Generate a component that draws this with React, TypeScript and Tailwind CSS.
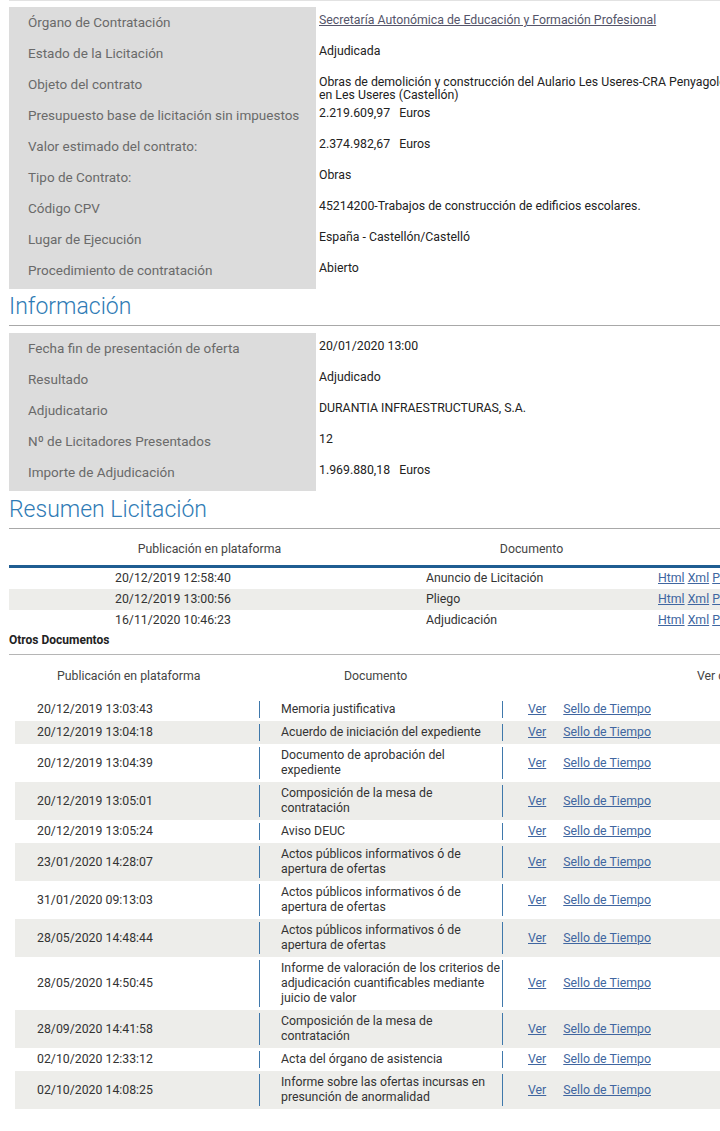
import React from 'react'

interface FilaProps {
  label: string
  value: React.ReactNode
}

const datosGenerales: FilaProps[] = [
  { label: 'Órgano de Contratación', value: <a className="underline text-[#55556a]">Secretaría Autonómica de Educación y Formación Profesional</a> },
  { label: 'Estado de la Licitación', value: 'Adjudicada' },
  { label: 'Objeto del contrato', value: <>Obras de demolición y construcción del Aulario Les Useres-CRA Penyagolosa<br />en Les Useres (Castellón)</> },
  { label: 'Presupuesto base de licitación sin impuestos', value: '2.219.609,97\u00a0\u00a0\u00a0Euros' },
  { label: 'Valor estimado del contrato:', value: '2.374.982,67\u00a0\u00a0\u00a0Euros' },
  { label: 'Tipo de Contrato:', value: 'Obras' },
  { label: 'Código CPV', value: '45214200-Trabajos de construcción de edificios escolares.' },
  { label: 'Lugar de Ejecución', value: 'España - Castellón/Castelló' },
  { label: 'Procedimiento de contratación', value: 'Abierto' },
]

const informacion: FilaProps[] = [
  { label: 'Fecha fin de presentación de oferta', value: '20/01/2020 13:00' },
  { label: 'Resultado', value: 'Adjudicado' },
  { label: 'Adjudicatario', value: 'DURANTIA INFRAESTRUCTURAS, S.A.' },
  { label: 'Nº de Licitadores Presentados', value: '12' },
  { label: 'Importe de Adjudicación', value: '1.969.880,18\u00a0\u00a0\u00a0Euros' },
]

const resumen = [
  { fecha: '20/12/2019 12:58:40', doc: 'Anuncio de Licitación' },
  { fecha: '20/12/2019 13:00:56', doc: 'Pliego' },
  { fecha: '16/11/2020 10:46:23', doc: 'Adjudicación' },
]

// cada documento lleva sus lineas ya partidas como en la pantalla original
const otros = [
  { fecha: '20/12/2019 13:03:43', doc: ['Memoria justificativa'] },
  { fecha: '20/12/2019 13:04:18', doc: ['Acuerdo de iniciación del expediente'] },
  { fecha: '20/12/2019 13:04:39', doc: ['Documento de aprobación del', 'expediente'] },
  { fecha: '20/12/2019 13:05:01', doc: ['Composición de la mesa de', 'contratación'] },
  { fecha: '20/12/2019 13:05:24', doc: ['Aviso DEUC'] },
  { fecha: '23/01/2020 14:28:07', doc: ['Actos públicos informativos ó de', 'apertura de ofertas'] },
  { fecha: '31/01/2020 09:13:03', doc: ['Actos públicos informativos ó de', 'apertura de ofertas'] },
  { fecha: '28/05/2020 14:48:44', doc: ['Actos públicos informativos ó de', 'apertura de ofertas'] },
  { fecha: '28/05/2020 14:50:45', doc: ['Informe de valoración de los criterios de', 'adjudicación cuantificables mediante', 'juicio de valor'] },
  { fecha: '28/09/2020 14:41:58', doc: ['Composición de la mesa de', 'contratación'] },
  { fecha: '02/10/2020 12:33:12', doc: ['Acta del órgano de asistencia'] },
  { fecha: '02/10/2020 14:08:25', doc: ['Informe sobre las ofertas incursas en', 'presunción de anormalidad'] },
]

function Bloque({ filas }: { filas: FilaProps[] }) {
  return (
    <div className="flex">
      {/* columna gris de etiquetas */}
      <div className="w-[307px] shrink-0 bg-[#dcdcdc] pb-[3px] flex flex-col">
        {filas.map((f) => (
          <div key={f.label} className="h-[31px] pl-[19px] flex items-center text-[13.5px] text-[#6a6a6a]">
            {f.label}
          </div>
        ))}
      </div>
      <div className="flex flex-col">
        {filas.map((f) => (
          <div key={f.label} className="h-[31px] pl-[3px] pt-[7px] text-[12.3px] leading-[13px] text-[#222] whitespace-nowrap">
            {f.value}
          </div>
        ))}
      </div>
    </div>
  )
}

function Titulo({ texto, espacio }: { texto: string; espacio: string }) {
  return (
    <div className={`border-b border-[#a8a8a8] pt-[2px] pb-[3px] ${espacio}`}>
      <h2 className="text-[23px] leading-[30px] font-light text-[#2f7bb5]">{texto}</h2>
    </div>
  )
}

export default function App() {
  return (
    <div className="w-[720px] h-[1131px] overflow-hidden bg-white" style={{ fontFamily: 'Roboto, "Liberation Sans", sans-serif' }}>
      <div className="pl-[9px] w-[900px]">
        <div className="border-t border-[#e2e2e2] pt-[6px] mb-[1px]">
          <Bloque filas={datosGenerales} />
        </div>

        <Titulo texto="Información" espacio="mb-[7px]" />
        <div className="mb-[2px]">
          <Bloque filas={informacion} />
        </div>

        <Titulo texto="Resumen Licitación" espacio="mb-0" />

        {/* tabla resumen */}
        <div className="text-[12.3px] text-[#333]">
          <div className="flex h-[36px] pt-[4px] items-center text-[#444]">
            <div className="w-[401px] shrink-0 text-center">Publicación en plataforma</div>
            <div className="w-[243px] shrink-0 text-center">Documento</div>
          </div>
          <div className="h-[3px] bg-[#1f5d92]" />
          {resumen.map((r, i) => (
            <div key={r.fecha} className={`flex h-[21px] items-center ${i % 2 === 1 ? 'bg-[#ededea]' : ''}`}>
              <div className="w-[401px] shrink-0 pl-[106px]">{r.fecha}</div>
              <div className="w-[243px] shrink-0 pl-[16px]">{r.doc}</div>
              <div className="pl-[5px] whitespace-nowrap text-[#4066a0]">
                <a className="underline">Html</a> <a className="underline">Xml</a> <a className="underline">Pdf</a>
              </div>
            </div>
          ))}
        </div>

        <div className="border-b border-[#b5b5b5] h-[24px] pt-[2px] font-bold text-[12px] leading-[14px] text-[#222]">
          Otros Documentos
        </div>

        {/* tabla otros documentos */}
        <div className="ml-[6px] text-[12.3px] text-[#333]">
          <div className="flex h-[43px] items-center text-[#444]">
            <div className="w-[244px] shrink-0 pl-[42px]">Publicación en plataforma</div>
            <div className="w-[243px] shrink-0 pl-[85px]">Documento</div>
            <div className="pl-[195px] whitespace-nowrap">Ver contenido</div>
          </div>
          {otros.map((o, i) => (
            <div key={o.fecha + i} className={`flex ${i % 2 === 1 ? 'bg-[#ededea]' : ''}`}>
              <div className="w-[244px] shrink-0 pl-[22px] flex items-center">{o.fecha}</div>
              <div className="w-px shrink-0 my-[3px] bg-[#3f78ab]" />
              <div className="w-[242px] shrink-0 pl-[21px] py-[4px] leading-[15px]">
                {o.doc.map((l) => (
                  <div key={l} className="whitespace-nowrap">{l}</div>
                ))}
              </div>
              <div className="w-px shrink-0 my-[3px] bg-[#3f78ab]" />
              <div className="pl-[25px] flex items-center gap-[17px] text-[#4066a0]">
                <a className="underline">Ver</a>
                <a className="underline">Sello de Tiempo</a>
              </div>
            </div>
          ))}
        </div>
      </div>
    </div>
  )
}
